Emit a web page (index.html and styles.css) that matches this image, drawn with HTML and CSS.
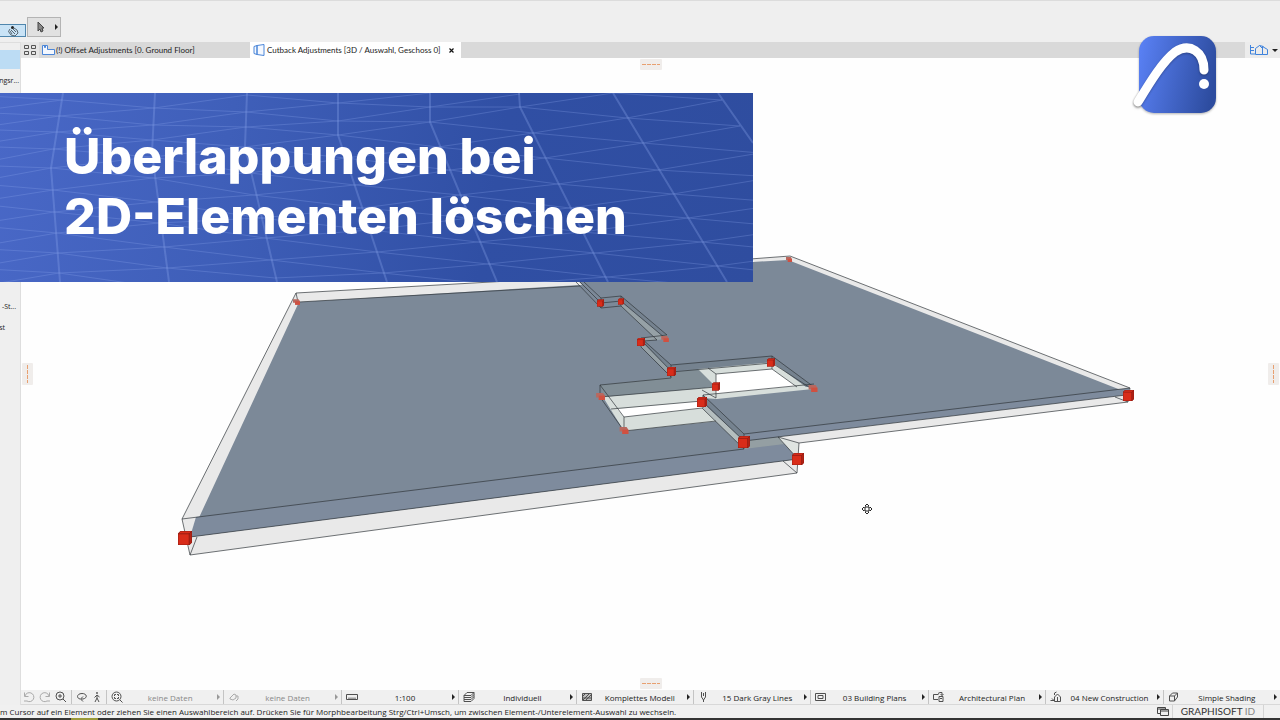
FILE: index.html
```html
<!DOCTYPE html>
<html lang="de">
<head>
	<meta charset="utf-8">
	<title>Überlappungen bei 2D-Elementen löschen</title>
	<meta name="viewport" content="width=device-width, initial-scale=1">

	<link rel="stylesheet" href="styles.css">
</head>
<body>
	<div class="app">

		<header class="toolbar">
			<button type="button" class="tool tool-active" aria-label="Magnet">
				<svg width="12" height="12" viewBox="0 0 12 12"><path d="M3 4L1.500 6.500 4 10l4 1 3-3-1-3-3-2M4 5l4 4M6 4l3 3M3 6l2 3" fill="none" stroke="#4b5760" stroke-width=".9"/><circle cx="5.500" cy="2.500" r="1.500" fill="#222"/></svg>
			</button>
			<button type="button" class="tool tool-arrow" aria-label="Pfeil">
				<svg width="8" height="12" viewBox="0 0 8 12"><path d="M1 1v9l2-2 1 3 2-1-1-3h2z" fill="#888" stroke="#444"/></svg>
				<span class="caret"></span>
			</button>
		</header>

		<main class="workspace">
			<aside class="sidebar">
				<div class="side-selected"></div>
				<div class="side-item">ngsr...</div>
				<div class="side-item side-lower">-St...</div>
				<div class="side-item side-last">st</div>
			</aside>

			<section class="document">
				<nav class="tabs">
					<button type="button" class="tab-overview" aria-label="Übersicht">
						<svg width="14" height="12" viewBox="0 0 14 12" fill="none" stroke="#555"><path d="M1.500 1.500h4v3h-4zM8.500 1.500h4v3h-4zM1.500 7.500h4v3h-4zM8.500 7.500h4v3h-4z"/></svg>
					</button>
					<button type="button" class="tab">
						<svg width="13" height="12" viewBox="0 0 13 12" fill="#f4f8ff" stroke="#4b86d8"><path d="M.5 1.500h5v4h7v5H.5zM2.500 1.500v2h1v-2"/></svg>
						<span>(!) Offset Adjustments [0. Ground Floor]</span>
					</button>
					<button type="button" class="tab tab-current">
						<svg width="13" height="12" viewBox="0 0 13 12" fill="#f4f8ff" stroke="#4b86d8"><path d="M1 2.500l3-1v9l-3-1zM4 1.500l7-1v11l-7-1z"/></svg>
						<span>Cutback Adjustments [3D / Auswahl, Geschoss 0]</span>
						<svg class="close" width="5" height="5" viewBox="0 0 5 5"><path d="M.5.5l4 4M4.500.5l-4 4" stroke="#111" stroke-width="1.200"/></svg>
					</button>
					<button type="button" class="tab-view" aria-label="Ansicht">
						<svg width="20" height="12" viewBox="0 0 20 12" fill="none" stroke="#3f83dc"><path d="M1.500 1v9H6M1 3.500h4M1 6.500h4M6.500 10.500v-6l4-3 3 3v6zM13.500 10.500V2.500l5 3v5zM10.500 1.500l4 1"/></svg>
						<span class="caret-down"></span>
					</button>
				</nav>

				<div class="viewport">
					<svg class="scene" viewBox="21 58 1259 632">
						<defs>
							<symbol id="cube" viewBox="0 0 10 10">
								<path d="M0 2l2-2h8v8l-2 2H0z" fill="#d92c19"/>
								<path d="M8 2l2-2v8l-2 2z" fill="#b42315"/>
								<path d="M0 2h8v8M8 2l2-2M0 2l2-2h8v8l-2 2H0z" fill="none" stroke="#8b1a12" stroke-width=".6"/>
							</symbol>
							<symbol id="cube-far" viewBox="0 0 10 8">
								<path d="M0 0h8l2 3v5H3V5H0z" fill="#b8685f"/>
								<path d="M3 3h7v5H3z" fill="#d05040"/>
							</symbol>
						</defs>

						<!-- left slab -->
						<path class="glass" d="M296 293L600 276L799 443L797 473L190 555L182 519z"/>
						<path class="slab" d="M299 302L580 285L753 262L778 437L798 459L190 537z"/>
						<path class="slab-front" d="M196 517L744 449L786 444L798 459L190 537z"/>
						<path fill="#949fa3" d="M744 441L778 437L785 444L744 449z"/>
						<path fill="#dfe4e1" d="M778 437L799 443L798 459z"/>

						<!-- right slab -->
						<path class="glass" d="M753 259L790 256L1130 388L1128 402L799 443L778 437z"/>
						<path class="slab" d="M575 278L753 262L788 260L1126 392L744 441L702 402L671 372L641 342L666 339L621 301L601 303z"/>
						<path class="slab-front" d="M744 434L1130 388L1126 395L744 441z"/>

						<!-- overlapping cut-out -->
						<path class="wall" d="M698 369L772 362L813 389L717 399L702 398z"/>
						<path fill="#fff" d="M716 374L772 369L796 386L716 394z"/>
						<path fill="#818e96" d="M600 385L671 377L671 372L698 369L716 387L604 397z"/>
						<path class="wall" d="M603 397L716 387L716 396L702 398L702 406L720 421L624 431z"/>
						<path fill="#fff" d="M617 409L702 401L704 408L624 417z"/>
						<path fill="#75828f" d="M671 365L772 356L814 387L806 387L772 362L671 371z"/>
						<path fill="#75828f" d="M703 395L744 434V441L702 402z"/>
						<path fill="#b5bebf" d="M703 403L744 441V449L702 408z"/>
						<path fill="#96a1a6" d="M621 302L665 338L657 340L621 306z"/>
						<path fill="#75828f" d="M621 296L667 335L665 338L621 300zM641 338L671 365V371L641 342z"/>
						<path fill="#96a1a6" d="M643 343L671 371V376L641 347zM641 338L667 335V339L643 341z"/>

						<g class="edges">
							<path d="M580 277L296 293L182 519L190 555L797 473L799 443L1128 402L1130 388L790 256L750 259"/>
							<path d="M580 286L299 302M190 537L798 459M182 519L744 449M744 434L1130 388M744 441L1126 395M296 293L298 302M190 555L197 537M797 473L783 461M778 437L799 443M778 437L798 459M1115 397L1128 402"/>
							<path d="M576 282L601 308L621 306L657 340M580 282L601 303L621 301L665 338M584 282L601 298L621 296L667 335L641 338L671 365L772 356L814 387M601 298V308M621 296V306M641 338V347L671 377M643 342L671 371M671 365V378L600 385L624 417V431M643 341L657 340"/>
							<path d="M671 372L772 363L812 389M772 356V369L797 387M716 374L772 369M708 368L716 374V398L702 390M600 385V397L624 431M600 397L716 387M611 409L702 401M624 417L702 408L744 449V434L703 395L814 384M703 402L744 441M703 395V408M624 431L716 421"/>
						</g>

						<use href="#cube" x="178" y="531" width="14" height="14"/>
						<use href="#cube-far" x="293" y="299" width="7" height="6"/>
						<use href="#cube-far" x="786" y="257" width="6" height="5"/>
						<use href="#cube" x="597" y="299" width="7" height="8"/>
						<use href="#cube" x="618" y="298" width="6" height="7"/>
						<use href="#cube-far" x="661" y="336" width="8" height="6"/>
						<use href="#cube" x="637" y="338" width="8" height="8"/>
						<use href="#cube" x="667" y="367" width="9" height="9"/>
						<use href="#cube" x="767" y="358" width="8" height="9"/>
						<use href="#cube-far" x="808" y="385" width="10" height="7"/>
						<use href="#cube" x="712" y="382" width="8" height="9"/>
						<use href="#cube" x="697" y="397" width="10" height="10"/>
						<use href="#cube-far" x="596" y="393" width="9" height="7"/>
						<use href="#cube-far" x="619" y="427" width="10" height="7"/>
						<use href="#cube" x="738" y="436" width="12" height="12"/>
						<use href="#cube" x="792" y="453" width="12" height="12"/>
						<use href="#cube" x="1123" y="390" width="11" height="11"/>

						<path class="cursor" d="M867 504l2 2h-1v2h2v-1l2 2-2 2v-1h-2v2h1l-2 2-2-2h1v-2h-2v1l-2-2 2-2v1h2v-2h-1z"/>
					</svg>

					<span class="handle handle-top"></span>
					<span class="handle handle-bottom"></span>
					<span class="handle handle-left"></span>
					<span class="handle handle-right"></span>
				</div>

				<div class="options">
					<div class="nav-group nav-zoom">
						<button type="button" class="muted" aria-label="Zurück"><svg width="12" height="12" viewBox="0 0 12 12"><path d="M1.500 1.500v4h4M2 5a4.500 4.500 0 1 1 2 5H1"/></svg></button>
						<button type="button" class="muted" aria-label="Vor"><svg width="12" height="12" viewBox="0 0 12 12"><path d="M10.500 1.500v4h-4M10 5a4.500 4.500 0 1 0-2 5h3"/></svg></button>
						<button type="button" aria-label="Zoom"><svg width="12" height="12" viewBox="0 0 12 12"><circle cx="5" cy="5" r="4"/><path d="M8 8l3 3M3 5h4M5 3v4"/></svg></button>
					</div>
					<div class="nav-group nav-walk">
						<button type="button" aria-label="Orbit"><svg width="12" height="12" viewBox="0 0 12 12"><path d="M4 8C0 7 1 2.500 6 2.500s6 4.500 1 5.500H5M7 5.500L4.500 8 7 10.500"/></svg></button>
						<button type="button" aria-label="Begehen"><svg width="8" height="12" viewBox="0 0 8 12"><circle cx="4" cy="2" r=".6"/><path d="M4 4v3l-2 4M4 7l2 4M1.500 6.500L4 4l2.500 2"/></svg></button>
					</div>

					<button type="button" class="option option-off">
						<svg width="12" height="12" viewBox="0 0 12 12"><circle cx="5.500" cy="5.500" r="4.500"/><path d="M9 9l2.500 2.500M3.500 5V3.500H5M6 3.500h1.500V5M3.500 6v1.500H5M6 7.500h1.500V6"/></svg>
						<span class="option-label">keine Daten</span><span class="caret"></span>
					</button>
					<button type="button" class="option option-off option-disabled">
						<svg width="12" height="12" viewBox="0 0 12 12"><path d="M2 7l4-4 2 1v3L5 9 2 8zM8 5h2v3l-2 2"/></svg>
						<span class="option-label">keine Daten</span><span class="caret"></span>
					</button>
					<button type="button" class="option">
						<svg width="12" height="12" viewBox="0 0 12 12"><path d="M.5 3.500h11v5H.5zM3 8V6.500M5 8V6.500M7 8V6.500M9 8V6.500"/></svg>
						<span class="option-label">1:100</span><span class="caret"></span>
					</button>
					<button type="button" class="option">
						<svg width="12" height="12" viewBox="0 0 12 12"><path d="M4 1.500h7L8 4.500H1zM1 4.500v2h7l3-3v-2M1 6.500v2h7l3-3v-2M1 8.500v2h7l3-3v-2"/></svg>
						<span class="option-label">Individuell</span><span class="caret"></span>
					</button>
					<button type="button" class="option">
						<svg width="12" height="12" viewBox="0 0 12 12"><path d="M1.500 2.500h9v7h-9z" fill="#bbb"/><path d="M2 5l2-2M2 9l6-6M5 9l5-5M2 7h8"/></svg>
						<span class="option-label">Komplettes Modell</span><span class="caret"></span>
					</button>
					<button type="button" class="option">
						<svg width="12" height="12" viewBox="0 0 12 12"><path d="M3.500 1v5l2 3 2-3V1M5.500 9v2M5.500 2v3"/></svg>
						<span class="option-label">15 Dark Gray Lines</span><span class="caret"></span>
					</button>
					<button type="button" class="option">
						<svg width="12" height="12" viewBox="0 0 12 12"><path d="M.5 2.500h10v7H.5zM3 4.500h5v3H3z"/></svg>
						<span class="option-label">03 Building Plans</span><span class="caret"></span>
					</button>
					<button type="button" class="option">
						<svg width="12" height="12" viewBox="0 0 12 12"><path d="M5 8.500H.5v-5h5M6 5.500h4v5H6zM7 7.500h2M5 2.500l2-1h2v3M7.500 3L9 4.500 10.500 3"/></svg>
						<span class="option-label">Architectural Plan</span><span class="caret"></span>
					</button>
					<button type="button" class="option">
						<svg width="12" height="12" viewBox="0 0 12 12"><path d="M4.500 6l3-3 3 3v4.500h-6zM.5 9.500h4M2 7.500l2 2M4.500 4V2l2-1M7.500 6v4"/></svg>
						<span class="option-label">04 New Construction</span><span class="caret"></span>
					</button>
					<button type="button" class="option">
						<svg width="12" height="12" viewBox="0 0 12 12"><path d="M1.500 5l3-3h5v4l-3 4h-5zM1.500 5h5v5M6.500 5l3-3"/></svg>
						<span class="option-label">Simple Shading</span><span class="caret"></span>
					</button>
				</div>
			</section>
		</main>

		<footer class="status">
			<span class="status-text">m Cursor auf ein Element oder ziehen Sie einen Auswahlbereich auf. Drücken Sie für Morphbearbeitung Strg/Ctrl+Umsch, um zwischen Element-/Unterelement-Auswahl zu wechseln.</span>
			<svg width="12" height="11" viewBox="0 0 12 11" fill="none" stroke="#444"><path d="M3 7.500H.5v-6h8V3M.5 3h8M3.500 3.500h8v6h-8zM3.500 5h8"/></svg>
			<a class="brand" href="#">GRAPHISOFT <span>ID</span></a>
		</footer>
		<div class="taskbar"></div>
	</div> <!-- .app -->

	<div class="banner">
		<svg class="mesh" width="753" height="189" viewBox="0 0 753 189">
			<g class="mesh-main">
				<path d="M63 0L51 75L60 189M155 0L152 60L169 189M247 0L245 53L277 189M338 0V42L387 189M430 0V29L497 189M519 0L520 14L608 189M613 0L727 189M718 0L753 50"/>
			</g>
			<g class="mesh-cross">
				<path d="M-30 2L62 7L-30 19L59 23L-30 36L56 39L-30 53L53 56L-30 72L51 75L-30 90L53 97L-30 110L54 119L-30 132L57 140L-30 155L58 160L-30 175L59 180L-30 195"/>
				<path d="M62 7L154 15L59 23L153 32L56 39L152 47L53 56L152 64L51 75L153 85L53 97L156 109L54 119L159 130L57 140L164 154L58 160L167 175L59 180L170 196"/>
				<path d="M247 2L154 15L246 19L153 32L246 34L152 47L245 54L152 64L250 80L153 85L254 102L156 109L260 125L159 130L265 145L164 154L271 167L167 175L275 185"/>
				<path d="M247 2L338 10L246 19L338 28L246 34L338 42L245 54L345 65L250 80L355 92L254 102L363 115L260 125L370 137L265 145L377 159L271 167L383 180L275 185"/>
				<path d="M430 0L338 10L430 14L338 28L430 29L338 42L438 54L345 65L450 77L355 92L460 102L363 115L470 125L370 137L478 149L377 159L488 171L383 180L497 192"/>
				<path d="M520 1L430 14L520 14L430 29L533 40L438 54L545 65L450 77L558 91L460 102L570 115L470 125L582 139L478 149L595 160L488 171L607 184L497 192"/>
				<path d="M613 0L520 14L627 25L533 40L643 50L545 65L658 77L558 91L673 101L570 115L688 125L582 139L702 149L595 160L717 173L607 184L730 195"/>
				<path d="M613 0L722 7L627 25L740 33L643 50L760 60L658 77L775 84L673 101L790 110L688 125L800 135L702 149L815 160L717 173L830 185"/>
			</g>
		</svg>
		<h1>Überlappungen bei<br>2D-Elementen löschen</h1>
	</div>

	<svg class="logo" width="90" height="86" viewBox="0 0 90 86">
		<defs>
			<linearGradient id="logo-fill" x1="0" y1=".3" x2="1" y2=".5">
				<stop offset="0" stop-color="#587ff2"/>
				<stop offset="1" stop-color="#2d4c9f"/>
			</linearGradient>
		</defs>
		<rect x="7" y="4" width="77" height="77" rx="15" fill="url(#logo-fill)"/>
		<path class="logo-arc" d="M6 70C17 52 30 30 43 20C58 10 72 20 72 38"/>
		<circle cx="72" cy="52" r="5" fill="#fff"/>
	</svg>
</body>
</html>
```

FILE: styles.css
```css
* {
	box-sizing: border-box;
}

body {
	margin: 0;
	font-family: "Open Sans", "Noto Sans", sans-serif;
	font-size: 8px;
	color: #222;
	background-color: #efefef;
}

button {
	margin: 0;
	padding: 0;
	border: 0;
	background: none;
	font: inherit;
	color: inherit;
}

svg {
	flex: none;
}

.app {
	display: flex;
	flex-direction: column;
	height: 100vh;
	overflow: hidden;
}

/* top toolbar */
.toolbar {
	display: flex;
	align-items: flex-end;
	gap: 1px;
	height: 42px;
	padding-bottom: 5px;
	border-top: 1px solid #dcdcdc;
}
.tool {
	display: flex;
	align-items: center;
	justify-content: center;
}
.tool-active {
	width: 26px;
	height: 13px;
	border: 1px solid #4f86ad;
	border-left: 0;
	background-color: #c9e3f6;
}
.tool-arrow {
	gap: 10px;
	width: 34px;
	height: 20px;
	padding-left: 6px;
	border: 1px solid #b4b4b4;
	background-color: #e1e1e1;
}
.caret {
	flex: none;
	border: 3px solid transparent;
	border-left: 3px solid #222;
	border-right: 0;
}
.caret-down {
	border: 3px solid transparent;
	border-top-color: #222;
	border-bottom: 0;
}

.workspace {
	display: flex;
	flex: 1;
	min-height: 0;
}

.sidebar {
	width: 21px;
	padding-top: 7px;
	border-right: 1px solid #dedede;
	border-top: 1px solid #dedede;
	font-size: 7px;
	overflow: hidden;
}
.side-selected {
	height: 19px;
	margin-bottom: 7px;
	background-color: #bcdcf4;
}
.side-item {
	display: flex;
	justify-content: flex-end;
	height: 10px;
	padding-right: 1px;
	line-height: 10px;
}
.side-lower {
	margin-top: 216px;
	padding-right: 4px;
}
.side-last {
	margin-top: 11px;
	padding-right: 15px;
}

.document {
	display: flex;
	flex: 1;
	flex-direction: column;
	min-width: 0;
}

/* tabs */
.tabs {
	display: flex;
	height: 16px;
	background-color: #d9d9d9;
	font-family: Lato, sans-serif;
}
.tab-overview {
	width: 18px;
	padding-top: 2px;
	background-color: #e6e6e6;
}
.tab {
	display: flex;
	align-items: center;
	gap: 1px;
	width: 211px;
	padding: 0 3px;
	white-space: nowrap;
}
.tab-current {
	background-color: #fff;
}
.close {
	margin-left: auto;
	margin-right: 4px;
}
.tab-view {
	display: flex;
	align-items: center;
	gap: 3px;
	width: 35px;
	margin-left: auto;
	padding-left: 4px;
	background-color: #ececec;
}

/* 3D view */
.viewport {
	position: relative;
	flex: 1;
	min-height: 0;
	background-color: #fefefe;
}
.scene {
	display: block;
	width: 100%;
	height: 100%;
}
.glass {
	fill: #e9e9e9;
}
.slab {
	fill: #7c8998;
}
.slab-front {
	fill: #7e8b9d;
}
.wall {
	fill: #d7dedb;
}
.edges {
	fill: none;
	stroke: #30363b;
	stroke-width: .7;
}
.cursor {
	fill: #fff;
	stroke: #222;
	stroke-width: 1;
}
.handle {
	position: absolute;
	display: flex;
	align-items: center;
	justify-content: center;
	width: 22px;
	height: 11px;
	border-radius: 1px;
	background-color: #f0edeb;
}
.handle::before {
	content: "";
	width: 18px;
	height: 1px;
	background: repeating-linear-gradient(90deg, #e8a070 0 4px, transparent 4px 5px);
}
.handle-top,
.handle-bottom {
	left: 50%;
	margin-left: -11px;
}
.handle-top {
	top: 1px;
}
.handle-bottom {
	bottom: 1px;
}
.handle-left,
.handle-right {
	top: 50%;
	width: 11px;
	height: 22px;
	margin-top: -11px;
}
.handle-left::before,
.handle-right::before {
	width: 1px;
	height: 18px;
	background: repeating-linear-gradient(#e8a070 0 4px, transparent 4px 5px);
}
.handle-left {
	left: 1px;
}
.handle-right {
	right: 1px;
}

/* quick options */
.options {
	display: flex;
	height: 15px;
	border-bottom: 1px solid #d8d8d8;
	background-color: #f0f0f0;
}
.options svg {
	fill: none;
	stroke: #505050;
	stroke-width: 1;
}
.nav-group {
	display: flex;
	align-items: center;
	gap: 4px;
	border-right: 1px solid #c4c4c4;
}
.nav-group button {
	display: flex;
}
.nav-zoom {
	width: 51px;
	padding-left: 2px;
}
.nav-walk {
	width: 35px;
	padding-left: 4px;
	gap: 5px;
}
.options .muted svg,
.options .option-disabled svg {
	stroke: #aaa;
}
.option {
	display: flex;
	flex: 1;
	align-items: center;
	min-width: 0;
	padding: 0 3px 0 4px;
	border-right: 1px solid #c4c4c4;
	white-space: nowrap;
}
.option:last-child {
	border-right: 0;
}
.option-label {
	flex: 1;
	text-align: center;
}
.option-off {
	color: #888;
}
.option-off .caret {
	border-left-color: #999;
}

/* status line */
.status {
	display: flex;
	align-items: center;
	height: 13px;
	background-color: #f0f0f0;
	white-space: nowrap;
}
.status-text {
	flex: 1;
}
.brand {
	width: 92px;
	margin-left: 3px;
	margin-right: 16px;
	border-left: 1px solid #d4d4d4;
	border-right: 1px solid #d4d4d4;
	font-family: Lato, sans-serif;
	font-size: 10px;
	line-height: 13px;
	text-align: center;
	text-decoration: none;
	color: #333;
}
.brand span {
	color: #888;
}
.taskbar {
	height: 2px;
	background: linear-gradient(90deg, #333 71px, #9a9a3a 71px 98px, #333 98px);
}

/* title banner */
.banner {
	position: absolute;
	top: 93px;
	left: 0;
	width: 753px;
	height: 189px;
	padding: 33px 0 0 64px;
	overflow: hidden;
	background: linear-gradient(100deg, #4968c7, #3f5fb9 30%, #304fa4 65%, #2f4d9f);
}
.banner h1 {
	position: relative;
	margin: 0;
	font-family: Inter, sans-serif;
	font-size: 50px;
	font-weight: 800;
	line-height: 60px;
	color: #fff;
	white-space: nowrap;
}
.mesh {
	position: absolute;
	top: 0;
	left: 0;
	fill: none;
	stroke: #8ea8ee;
}
.mesh-main {
	stroke-width: 2;
	opacity: .3;
}
.mesh-cross {
	stroke-width: 1;
	opacity: .28;
}

.logo {
	position: absolute;
	top: 32px;
	right: 58px;
	filter: drop-shadow(0 1px 1px rgba(0, 0, 0, .3));
}
.logo-arc {
	fill: none;
	stroke: #fff;
	stroke-width: 9;
	stroke-linecap: round;
	filter: drop-shadow(0 1px 1px rgba(0, 0, 0, .3));
}
```
